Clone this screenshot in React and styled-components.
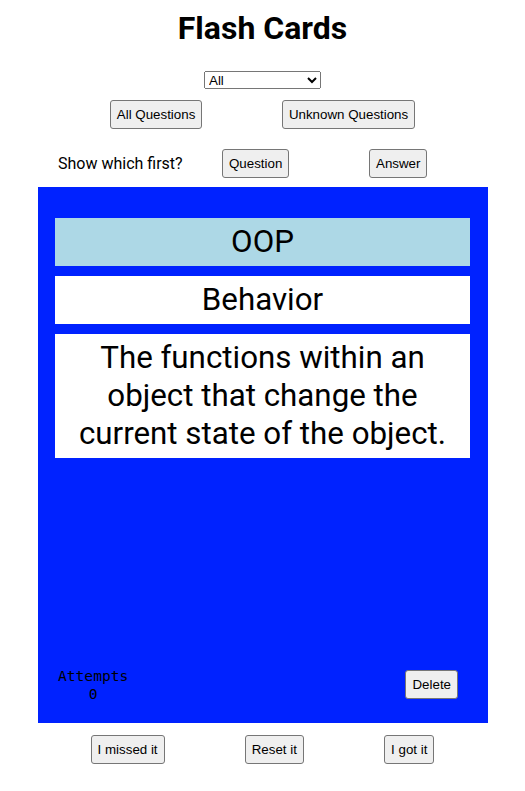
import React, { useState } from "react";
import styled, { createGlobalStyle } from "styled-components";

const GlobalStyle = createGlobalStyle`
  body {
    margin: 0;
    font-family: Roboto, "Liberation Sans", sans-serif;
    background: #fff;
    color: #000;
  }
`;

const Page = styled.div`
  width: 525px;
  display: flex;
  flex-direction: column;
  align-items: center;
`;

const Title = styled.h1`
  margin: 10px 0 0;
  font-size: 32px;
  font-weight: 700;
  line-height: 37.5px;
`;

const Select = styled.select`
  margin-top: 23px;
  width: 117px;
  height: 18px;
  font-family: "Liberation Sans", Arial, sans-serif;
  font-size: 13.33px;
  padding: 0;
`;

const Row = styled.div`
  display: flex;
  justify-content: space-around;
  align-items: center;
  box-sizing: border-box;
  width: ${({ $width }) => $width}px;
  margin-top: ${({ $top }) => $top}px;
`;

const ShowRow = styled.div`
  align-self: stretch;
  display: grid;
  grid-template-columns: 164px 147px auto;
  align-items: center;
  justify-items: start;
  padding-left: 58px;
  margin-top: 20px;
`;

const Button = styled.button`
  font-family: "Liberation Sans", Arial, sans-serif;
  font-size: 13.33px;
  line-height: 17px;
  padding: 5px 6px;
  background: #efefef;
  color: #000;
  border: 1px solid #767676;
  border-radius: 3px;
  cursor: pointer;
`;

const Prompt = styled.span`
  font-size: 16px;
`;

const Card = styled.div`
  box-sizing: border-box;
  width: 450px;
  height: 536px;
  margin-top: 9px;
  margin-left: 1px;
  padding: 31px 18px 20px 17px;
  background: #0022ff;
  display: flex;
  flex-direction: column;
  gap: 10px;
`;

const Face = styled.div`
  background: ${({ $head }) => ($head ? "lightblue" : "#fff")};
  padding: 5px 8px;
  font-size: 31.3px;
  line-height: 38px;
  text-align: center;
`;

const Footer = styled.div`
  margin-top: auto;
  display: flex;
  justify-content: space-between;
  align-items: center;
  padding: 0 12px 0 3px;
`;

const Attempts = styled.div`
  font-family: "DejaVu Sans Mono", monospace;
  font-size: 14.6px;
  line-height: 18px;
  text-align: center;
`;

export default function App() {
  const [attempts, setAttempts] = useState(0);

  return (
    <Page>
      <GlobalStyle />
      <Title>Flash Cards</Title>
      <Select defaultValue="All">
        <option>All</option>
        <option>Object Oriented Programming</option>
      </Select>
      <Row $width={385} $top={11}>
        <Button>All Questions</Button>
        <Button>Unknown Questions</Button>
      </Row>
      <ShowRow>
        <Prompt>Show which first?</Prompt>
        <Button>Question</Button>
        <Button>Answer</Button>
      </ShowRow>
      <Card>
        <Face $head>OOP</Face>
        <Face>Behavior</Face>
        <Face>
          The functions within an object that change the current state of the
          object.
        </Face>
        <Footer>
          <Attempts>
            Attempts
            <br />
            {attempts}
          </Attempts>
          <Button>Delete</Button>
        </Footer>
      </Card>
      <Row $width={424} $top={12}>
        <Button onClick={() => setAttempts(attempts + 1)}>I missed it</Button>
        <Button onClick={() => setAttempts(0)}>Reset it</Button>
        <Button onClick={() => setAttempts(attempts + 1)}>I got it</Button>
      </Row>
    </Page>
  );
}
